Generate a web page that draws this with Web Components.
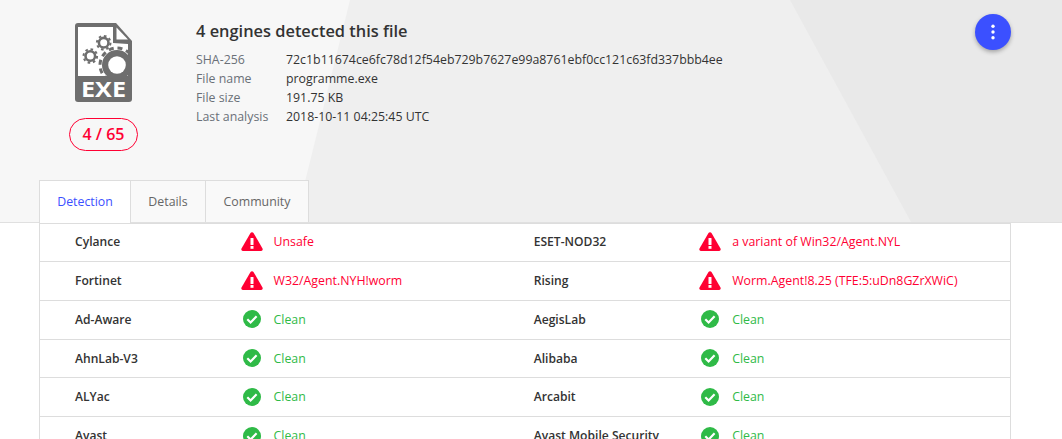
<!DOCTYPE html>
<html>
<head>
<meta charset="utf-8">
<title>Detection</title>
<style>
    html, body {
        margin: 0;
        height: 100%;
        overflow: hidden;
        background: #fff;
        font-family: "Open Sans", "Noto Sans", sans-serif;
        font-size: 13px;
    }
</style>
</head>
<body>
<vt-header>
    <file-icon slot="icon"></file-icon>
    <score-badge slot="icon">4 / 65</score-badge>
    <h1 slot="title" style="margin:0;font-size:inherit;font-weight:inherit">4 engines detected this file</h1>
    <info-row slot="info" label="SHA-256">72c1b11674ce6fc78d12f54eb729b7627e99a8761ebf0cc121c63fd337bbb4ee</info-row>
    <info-row slot="info" label="File name">programme.exe</info-row>
    <info-row slot="info" label="File size">191.75 KB</info-row>
    <info-row slot="info" label="Last analysis">2018-10-11 04:25:45 UTC</info-row>
    <menu-fab slot="action"></menu-fab>
    <tab-item slot="tabs" active style="width:92px">Detection</tab-item>
    <tab-item slot="tabs" style="width:76px">Details</tab-item>
    <tab-item slot="tabs" style="width:104px">Community</tab-item>
</vt-header>
<detection-table>
    <detection-cell engine="Cylance" result="Unsafe" status="bad"></detection-cell>
    <detection-cell engine="ESET-NOD32" result="a variant of Win32/Agent.NYL" status="bad"></detection-cell>
    <detection-cell engine="Fortinet" result="W32/Agent.NYH!worm" status="bad"></detection-cell>
    <detection-cell engine="Rising" result="Worm.Agent!8.25 (TFE:5:uDn8GZrXWiC)" status="bad"></detection-cell>
    <detection-cell engine="Ad-Aware" result="Clean"></detection-cell>
    <detection-cell engine="AegisLab" result="Clean"></detection-cell>
    <detection-cell engine="AhnLab-V3" result="Clean"></detection-cell>
    <detection-cell engine="Alibaba" result="Clean"></detection-cell>
    <detection-cell engine="ALYac" result="Clean"></detection-cell>
    <detection-cell engine="Arcabit" result="Clean"></detection-cell>
    <detection-cell engine="Avast" result="Clean"></detection-cell>
    <detection-cell engine="Avast Mobile Security" result="Clean"></detection-cell>
</detection-table>

<script>
class VtHeader extends HTMLElement {
    constructor() {
        super();
        this.attachShadow({ mode: 'open' });
        this.shadowRoot.innerHTML = `
            <style>
                :host {
                    display: flex;
                    flex-direction: column;
                    position: relative;
                    height: 222px;
                    background: #f7f7f7;
                    border-bottom: 1px solid #e0e0e0;
                    color: #333;
                }
                .mid, .right {
                    position: absolute;
                    inset: 0;
                }
                .mid {
                    background: #efefef;
                    clip-path: polygon(350px 0, 100% 0, 100% 100%, 295px 100%);
                }
                .right {
                    background: #e9e9e9;
                    clip-path: polygon(790px 0, 100% 0, 100% 100%, 911px 100%);
                }
                .summary {
                    position: relative;
                    display: flex;
                    flex: none;
                    box-sizing: border-box;
                    padding: 23px 51px 0 69px;
                    height: 180px;
                }
                .icon {
                    display: flex;
                    flex-direction: column;
                    align-items: center;
                    width: 69px;
                    gap: 16px;
                }
                .text {
                    flex: 1;
                    margin-left: 58px;
                }
                .title {
                    font-size: 16.4px;
                    font-weight: 600;
                    line-height: 24px;
                    margin: -4px 0 7px;
                    color: #333;
                }
                .action {
                    margin-top: -9px;
                }
                .tabs {
                    position: relative;
                    display: flex;
                    align-items: flex-start;
                    height: 42px;
                    padding-left: 39px;
                }
            </style>
            <div class="mid"></div>
            <div class="right"></div>
            <div class="summary">
                <div class="icon"><slot name="icon"></slot></div>
                <div class="text">
                    <div class="title"><slot name="title"></slot></div>
                    <slot name="info"></slot>
                </div>
                <div class="action"><slot name="action"></slot></div>
            </div>
            <div class="tabs"><slot name="tabs"></slot></div>
        `;
    }
}

class FileIcon extends HTMLElement {
    constructor() {
        super();
        this.attachShadow({ mode: 'open' });
        this.shadowRoot.innerHTML = `
            <style>
                :host { display: block; width: 57px; height: 79px; }
                svg { display: block; }
                text {
                    font-family: "Open Sans", "Noto Sans", sans-serif;
                    font-weight: 700;
                    font-size: 21px;
                    fill: #fff;
                }
            </style>
            <svg width="57" height="79" viewBox="0 0 57 79">
                <defs>
                    <clipPath id="body"><rect width="57" height="57"/></clipPath>
                </defs>
                <path fill="#6e6e6e" d="M3 0H41L57 18V76a3 3 0 0 1-3 3H3a3 3 0 0 1-3-3V3a3 3 0 0 1 3-3Z"/>
                <path fill="#fff" d="M3 4H38V20L53 21V53H3Z"/>
                <path fill="#fff" d="M41.500 4.500L53 16.500H41.500Z"/>
                <circle cx="28.700" cy="19.700" r="4.800" fill="none" stroke="#6e6e6e" stroke-width="2.600"/>
                <circle cx="28.700" cy="19.700" r="6.800" fill="none" stroke="#6e6e6e" stroke-width="2" stroke-dasharray="2.6 2.74"/>
                <circle cx="15.300" cy="33" r="4.800" fill="none" stroke="#6e6e6e" stroke-width="2.600"/>
                <circle cx="15.300" cy="33" r="6.800" fill="none" stroke="#6e6e6e" stroke-width="2" stroke-dasharray="2.6 2.74"/>
                <g clip-path="url(#body)">
                    <circle cx="42" cy="42" r="15" fill="#6e6e6e"/>
                    <circle cx="42" cy="42" r="17" fill="none" stroke="#6e6e6e" stroke-width="3" stroke-dasharray="5 3.900"/>
                </g>
                <circle cx="42" cy="42" r="8.800" fill="#fff"/>
                <text x="28.500" y="74" text-anchor="middle" textLength="45" lengthAdjust="spacingAndGlyphs">EXE</text>
            </svg>
        `;
    }
}

class ScoreBadge extends HTMLElement {
    constructor() {
        super();
        this.attachShadow({ mode: 'open' });
        this.shadowRoot.innerHTML = `
            <style>
                :host {
                    display: block;
                    box-sizing: border-box;
                    width: 69px;
                    height: 33px;
                    border: 1px solid #ff0033;
                    border-radius: 17px;
                    color: #ff0033;
                    font-size: 16px;
                    font-weight: 600;
                    line-height: 31px;
                    text-align: center;
                }
            </style>
            <slot></slot>
        `;
    }
}

class InfoRow extends HTMLElement {
    constructor() {
        super();
        this.attachShadow({ mode: 'open' });
        this.shadowRoot.innerHTML = `
            <style>
                :host {
                    display: flex;
                    font-size: 12.35px;
                    line-height: 19px;
                }
                .label {
                    width: 90px;
                    color: #6a7078;
                }
                .value {
                    color: #333;
                }
            </style>
            <div class="label"></div>
            <div class="value"><slot></slot></div>
        `;
    }

    connectedCallback() {
        this.shadowRoot.querySelector('.label').textContent = this.getAttribute('label');
    }
}

class MenuFab extends HTMLElement {
    constructor() {
        super();
        this.attachShadow({ mode: 'open' });
        this.shadowRoot.innerHTML = `
            <style>
                :host {
                    display: flex;
                    align-items: center;
                    justify-content: center;
                    width: 36px;
                    height: 36px;
                    border-radius: 50%;
                    background: #3b50ff;
                    box-shadow: 0 2px 4px rgba(0, 0, 0, .3);
                }
            </style>
            <svg width="4" height="16" viewBox="0 0 4 16" fill="#fff">
                <circle cx="2" cy="2.200" r="1.700"/>
                <circle cx="2" cy="8" r="1.700"/>
                <circle cx="2" cy="13.800" r="1.700"/>
            </svg>
        `;
    }
}

class TabItem extends HTMLElement {
    constructor() {
        super();
        this.attachShadow({ mode: 'open' });
        this.shadowRoot.innerHTML = `
            <style>
                :host {
                    display: block;
                    box-sizing: border-box;
                    height: 42px;
                    margin-right: -1px;
                    border: 1px solid #dddddd;
                    border-bottom: 0;
                    background: #f9f9f9;
                    color: #666;
                    font-size: 12.35px;
                    line-height: 42px;
                    text-align: center;
                }
                :host([active]) {
                    height: 43px;
                    background: #fff;
                    color: #3b50ff;
                }
            </style>
            <slot></slot>
        `;
    }
}

class DetectionTable extends HTMLElement {
    constructor() {
        super();
        this.attachShadow({ mode: 'open' });
        this.shadowRoot.innerHTML = `
            <style>
                :host {
                    display: grid;
                    grid-template-columns: 458.7px 1fr;
                    box-sizing: border-box;
                    width: 972px;
                    margin-left: 39px;
                    padding-top: .25px;
                    border-left: 1px solid #dddddd;
                    border-right: 1px solid #dddddd;
                    box-shadow: inset 0 1px #dddddd;
                }
            </style>
            <slot></slot>
        `;
    }
}

const warningIcon = `
    <svg width="22" height="19" viewBox="0 0 22 19">
        <path fill="#ff0033" d="M9.500 1a1.800 1.800 0 0 1 3 0l9 15.500A1.700 1.700 0 0 1 20 19H2A1.700 1.700 0 0 1 .5 16.500Z"/>
        <rect x="9.500" y="6" width="3" height="7" rx=".6" fill="#fff"/>
        <rect x="9.500" y="14" width="3" height="2.800" fill="#fff"/>
    </svg>`;

const cleanIcon = `
    <svg width="18" height="18" viewBox="0 0 18 18">
        <circle cx="9" cy="9" r="9" fill="#2fba47"/>
        <path fill="none" stroke="#fff" stroke-width="2.200" d="M4.300 9.200l3.300 3.300 6-6.200"/>
    </svg>`;

class DetectionCell extends HTMLElement {
    constructor() {
        super();
        this.attachShadow({ mode: 'open' });
        this.shadowRoot.innerHTML = `
            <style>
                :host {
                    display: grid;
                    grid-template-columns: 165.5px 33px 1fr;
                    align-items: center;
                    box-sizing: border-box;
                    height: 38.75px;
                    padding-left: 35px;
                    padding-bottom: .4px;
                    border-bottom: 1px solid #dddddd;
                    font-size: 12.35px;
                }
                .engine {
                    color: #333;
                    font-size: 12.1px;
                    font-weight: 560;
                }
                .icon {
                    display: flex;
                    justify-content: center;
                    width: 22px;
                }
                .result {
                    color: #2fba47;
                }
                :host([status="bad"]) .result {
                    color: #ff0033;
                }
            </style>
            <div class="engine"></div>
            <div class="icon"></div>
            <div class="result"></div>
        `;
    }

    connectedCallback() {
        const root = this.shadowRoot;
        root.querySelector('.engine').textContent = this.getAttribute('engine');
        root.querySelector('.result').textContent = this.getAttribute('result');
        root.querySelector('.icon').innerHTML =
            this.getAttribute('status') === 'bad' ? warningIcon : cleanIcon;
    }
}

customElements.define('vt-header', VtHeader);
customElements.define('file-icon', FileIcon);
customElements.define('score-badge', ScoreBadge);
customElements.define('info-row', InfoRow);
customElements.define('menu-fab', MenuFab);
customElements.define('tab-item', TabItem);
customElements.define('detection-table', DetectionTable);
customElements.define('detection-cell', DetectionCell);
</script>
</body>
</html>
